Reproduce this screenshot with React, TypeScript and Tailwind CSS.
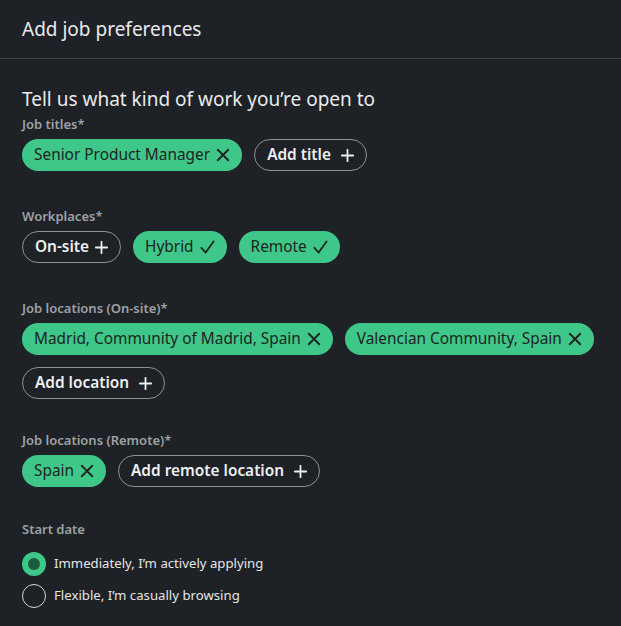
import React, { useState } from 'react';

const font = { fontFamily: '"Noto Sans", "Open Sans", sans-serif' };

const XIcon = () => (
    <svg width="14" height="14" viewBox="0 0 16 16" fill="none" stroke="currentColor" strokeWidth="2.1" strokeLinecap="round">
        <path d="M2 2l12 12M14 2L2 14" />
    </svg>
);

const PlusIcon = () => (
    <svg width="13" height="13" viewBox="0 0 16 16" fill="none" stroke="currentColor" strokeWidth="2.2" strokeLinecap="round">
        <path d="M8 1v14M1 8h14" />
    </svg>
);

const CheckIcon = () => (
    <svg width="15" height="14" viewBox="0 0 16 15" fill="none" stroke="currentColor" strokeWidth="1.9" strokeLinecap="round" strokeLinejoin="round">
        <path d="M1.5 8.5l4.5 5L14.5 1.5" />
    </svg>
);

// Selected green chip
const Chip = ({ label, icon = 'x' }: { label: string; icon?: 'x' | 'check' }) => (
    <button className="h-8 pl-3 pr-3 rounded-full bg-[#3fc78a] text-[#1b2421] text-[15.4px] flex items-center gap-1.5 whitespace-nowrap">
        <span>{label}</span>
        {icon === 'x' ? <XIcon /> : <CheckIcon />}
    </button>
);

// Outlined "add" chip
const AddChip = ({ label, tight }: { label: string; tight?: boolean }) => (
    <button
        className={`h-8 pl-3 pr-3 rounded-full border border-[#8c8f93] text-[#eceff1] text-[15.4px] font-semibold flex items-center whitespace-nowrap ${tight ? 'gap-1.5' : 'gap-2.5'}`}
    >
        <span>{label}</span>
        <PlusIcon />
    </button>
);

const Label = ({ children }: { children: React.ReactNode }) => (
    <div className="text-[13px] font-semibold text-[#9ea1a5] leading-4">{children}</div>
);

const App: React.FC = () => {
    const [startDate, setStartDate] = useState('now');

    return (
        <div className="w-[621px] h-[626px] bg-[#1e2125] text-[#e8eaed] overflow-hidden" style={font}>
            {/* Header */}
            <div className="h-[59px] px-[22px] flex items-center border-b border-[#3c4045]">
                <h1 className="text-[19px] leading-6">Add job preferences</h1>
            </div>

            <div className="px-[22px] pt-[28px]">
                <h2 className="text-[19px] leading-6">Tell us what kind of work you’re open to</h2>

                {/* Job titles */}
                <div className="mt-[5px]">
                    <Label>Job titles*</Label>
                    <div className="mt-[7px] flex flex-wrap gap-3">
                        <Chip label="Senior Product Manager" />
                        <AddChip label="Add title" />
                    </div>
                </div>

                {/* Workplaces */}
                <div className="mt-[37px]">
                    <Label>Workplaces*</Label>
                    <div className="mt-[7px] flex flex-wrap gap-3">
                        <AddChip label="On-site" tight />
                        <Chip label="Hybrid" icon="check" />
                        <Chip label="Remote" icon="check" />
                    </div>
                </div>

                {/* On-site locations */}
                <div className="mt-[37px]">
                    <Label>Job locations (On-site)*</Label>
                    <div className="mt-[7px] flex flex-wrap gap-3">
                        <Chip label="Madrid, Community of Madrid, Spain" />
                        <Chip label="Valencian Community, Spain" />
                        <AddChip label="Add location" />
                    </div>
                </div>

                {/* Remote locations */}
                <div className="mt-[33px]">
                    <Label>Job locations (Remote)*</Label>
                    <div className="mt-[7px] flex flex-wrap gap-3">
                        <Chip label="Spain" />
                        <AddChip label="Add remote location" />
                    </div>
                </div>

                {/* Start date */}
                <div className="mt-[34px]">
                    <Label>Start date</Label>
                    <div className="mt-[15px] flex flex-col gap-2">
                        {[
                            { id: 'now', text: 'Immediately, I’m actively applying' },
                            { id: 'flex', text: 'Flexible, I’m casually browsing' },
                        ].map((o) => (
                            <label key={o.id} className="flex items-center gap-2 cursor-pointer" onClick={() => setStartDate(o.id)}>
                                {startDate === o.id ? (
                                    <span className="w-6 h-6 rounded-full bg-[#3fc78a] flex items-center justify-center">
                                        <span className="w-3 h-3 rounded-full bg-[#1d5a3e]" />
                                    </span>
                                ) : (
                                    <span className="w-6 h-6 rounded-full border border-[#d5d7da]" />
                                )}
                                <span className="text-[13.2px] text-[#e4e6e8]">{o.text}</span>
                            </label>
                        ))}
                    </div>
                </div>
            </div>
        </div>
    );
};

export default App;
